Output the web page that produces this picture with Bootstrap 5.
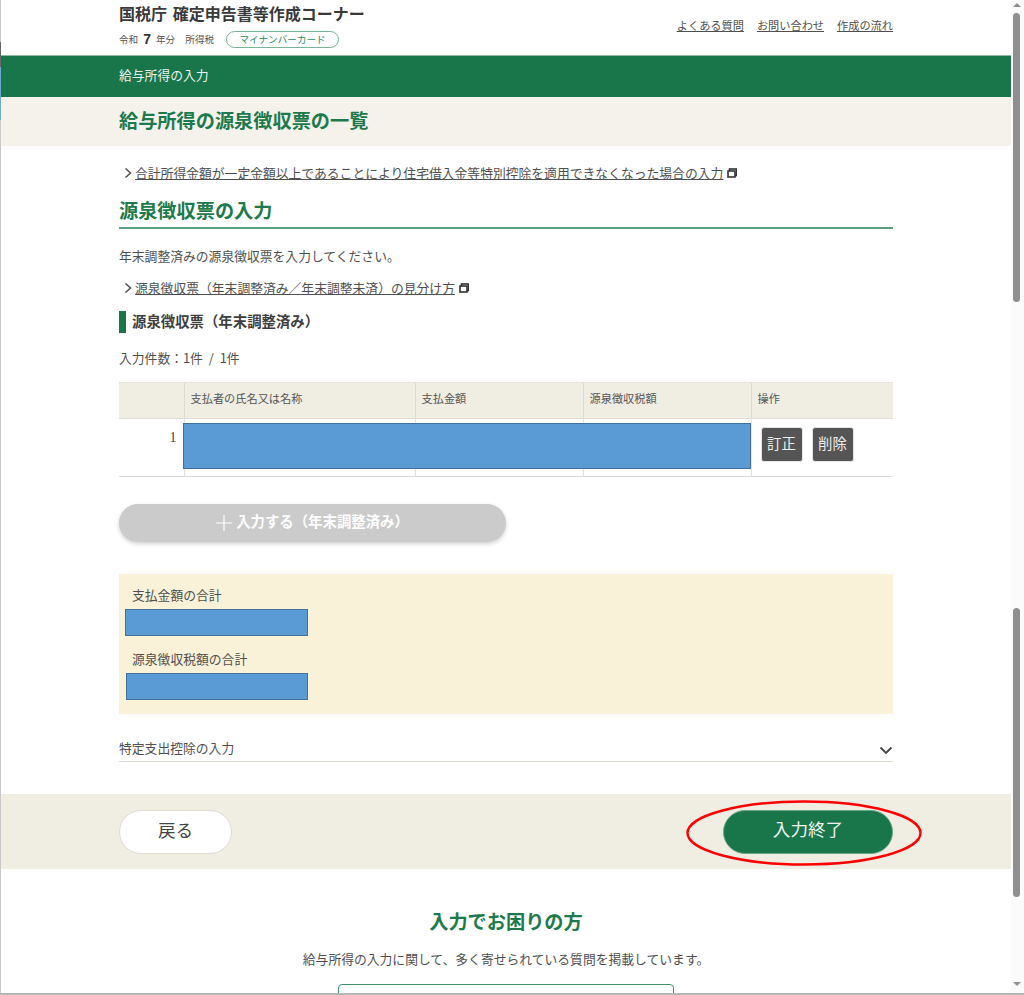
<!DOCTYPE html>
<html lang="ja">
<head>
<meta charset="utf-8">
<title>給与所得の源泉徴収票の一覧</title>
<link href="https://cdn.jsdelivr.net/npm/bootstrap@5.3.0/dist/css/bootstrap.min.css" rel="stylesheet">
<style>
html,body{height:995px;overflow:hidden;background:#fff}
body{font-family:"Noto Sans CJK JP","Liberation Sans",sans-serif;color:#505050;font-size:12.8px;line-height:1.4}
a{color:#505050}
.shell{width:1024px;height:995px;position:relative;overflow:hidden}
.edge-l{width:1px;background:#c9c9c9;flex:none}
.edge-l i{display:block;width:1px}
.edge-l .e1{height:42px}
.edge-l .e2{height:25px;background:#666}
.edge-l .e3{height:53px;background:#6fa9d0}
.pane{width:1010px;flex:none;overflow:hidden}
.wrap{width:774px}
.hdr{height:55px}
.site-title{font-size:16px;font-weight:700;color:#3a3a3a;line-height:22px;padding-top:2px;word-spacing:2px}
.site-sub{font-size:9.6px;color:#555;margin-top:7px;height:17px}
.site-sub b{font-size:14px;font-weight:700;font-family:"Liberation Sans",sans-serif;color:#333;margin:0 5px}
.my-pill{width:113px;height:17px;border:1px solid #79b498;border-radius:9px;color:#2f8a5e;line-height:14px;margin-left:12px}
.toplinks{font-size:11.2px;gap:13px;padding-top:17px;line-height:17px}
.bar-g{height:42px;background:#19754a;border-top:1px solid #8fbba5;color:#e9f2ed;padding-bottom:3px}
.band{height:49px;background:#f5f2ec;padding-bottom:2px}
.band-t,.sec-h{font-size:19.2px;font-weight:700;color:#1d7a4c;margin:0}
.lnk-row{height:20px;font-size:12.8px;line-height:20px}
.lnk-row svg{flex:none}
.chev{margin:0 3px 0 5px}
.lnk-one{margin-top:17px}
.sec-h{margin-top:15px;height:31px;line-height:24px;border-bottom:2px solid #5aa282}
.intro{margin:18px 0 0;height:18px;line-height:18px}
.lnk-two{margin-top:13px}
.sub-h{margin-top:13px;height:22px;border-left:7px solid #19754a;padding-left:6px;font-size:14.4px;font-weight:700;color:#3f3f3f;line-height:20px}
.count{margin-top:16px;height:18px;line-height:18px;word-spacing:3px}
.tbl-box{margin-top:15px;position:relative;height:95px}
.tbl{table-layout:fixed;width:774px;margin:0;border-collapse:collapse}
.tbl th{background:#f0ede3;font-size:11.2px;font-weight:400;height:36px;padding:0 6px 4px;vertical-align:middle;color:#555;border:0;border-left:1px solid #dedbd0;border-top:1px solid #e6e4dc;border-bottom:1px solid #e2dfd6}
.tbl th:first-child,.tbl td:first-child{border-left:0}
.tbl td{height:58px;padding:0;border:0;border-left:1px solid #e2e2e0;border-bottom:1px solid #dcdcdc;vertical-align:top;background:#fff}
.tbl .num{text-align:right;padding:9px 7px 0 0;font-family:"Liberation Serif",serif;font-size:14px;color:#444}
.ops{padding:8px 0 0 9px!important}
.op-row{gap:9px}
.btn-op{width:42px;height:35px;background:#555;color:#eee;font-size:14.4px;padding:0 0 4px;border:1px solid #e4e4e4;border-radius:3px;line-height:27px}
.btn-op:hover{background:#555;color:#eee}
.mask{background:#5b9bd5;border:1px solid #41719c}
.mask-row{position:absolute;left:64px;top:41px;width:568px;height:46px}
.btn-add{margin-top:27px;width:387px;height:38px;background:#cbcbcb;color:#fff;border:0;border-radius:19px;font-size:14.4px;font-weight:700;box-shadow:0 2px 4px rgba(0,0,0,.18);padding:0 0 4px}
.btn-add:disabled{background:#cbcbcb;color:#fff;opacity:1}
.btn-add svg{margin-top:3px}
.sum{margin-top:32px;height:140px;background:#f9f1d8;padding:12px 0 0 0}
.sum-l{padding-left:13px;height:18px;line-height:18px}
.mask-a{width:183px;height:27px;margin:5px 0 0 6px}
.mask-b{width:182px;height:27px;margin:5px 0 0 7px}
.sum-l2{margin-top:14px}
.acc{margin-top:26px;height:22px;border-bottom:1px solid #dddbd2;line-height:16px}
.acc svg{margin-top:6px}
.foot{margin-top:32px;height:75px;background:#f0ede3}
.btn-back{width:113px;height:44px;background:#fff;border:1px solid #e1dccf;border-radius:22px;color:#444;font-size:17.6px;padding:0 0 4px;margin-top:1px}
.btn-next{width:170px;height:44px;background:#19754a;border:1px solid #6aa587;border-radius:22px;color:#eef5f0;font-size:17.6px;padding:0 0 4px}
.btn-next:hover{background:#19754a;color:#eef5f0}
.help-h{margin:40px 0 0;font-size:19.2px;font-weight:700;color:#1d7a4c;line-height:24px;height:24px}
.help-t{margin:17px 0 0;height:18px;line-height:18px}
.help-box{width:336px;height:40px;margin-top:16px;border:1px solid #3f8f6a;border-radius:4px}
.sb{width:13px;flex:none;background:#fbfbfb}
.sb-up{width:0;height:0;border-left:4px solid transparent;border-right:4px solid transparent;border-bottom:4px solid #8f8f8f;margin:3px auto 0 2px}
.thumb{width:7px;background:#8f8f8f;border-radius:4px;margin-left:2px}
.t1{height:289px;margin-top:6px}
.t2{height:289px;margin-top:306px}
.sb-dn{width:0;height:0;border-left:4px solid transparent;border-right:4px solid transparent;border-top:4px solid #8f8f8f;margin:85px 0 0 2px}
.edge-r{width:1px;background:#d2d2d2;flex:none}
.edge-b{position:absolute;left:0;right:0;bottom:0;height:2px;background:#b5b5b5}
.ring{position:absolute;left:686px;top:800px}
</style>
</head>
<body>
<div class="shell d-flex">
  <div class="edge-l"><i class="e1"></i><i class="e2"></i><i class="e3"></i></div>
  <div class="pane">
    <header class="hdr">
      <div class="wrap mx-auto d-flex justify-content-between">
        <div>
          <div class="site-title">国税庁 確定申告書等作成コーナー</div>
          <div class="site-sub d-flex align-items-center">令和<b>7</b>年分<span class="ms-2">&nbsp;所得税</span><span class="my-pill d-inline-block text-center">マイナンバーカード</span></div>
        </div>
        <nav class="toplinks d-flex"><a href="#">よくある質問</a><a href="#">お問い合わせ</a><a href="#">作成の流れ</a></nav>
      </div>
    </header>
    <div class="bar-g d-flex align-items-center"><div class="wrap mx-auto">給与所得の入力</div></div>
    <div class="band d-flex align-items-center"><div class="wrap mx-auto"><h1 class="band-t mb-0">給与所得の源泉徴収票の一覧</h1></div></div>
    <main class="wrap mx-auto">
      <div class="lnk-row lnk-one d-flex align-items-center">
        <svg class="chev" width="8" height="12" viewBox="0 0 8 12"><path d="M1.500 1.500 6.500 6 1.500 10.500" fill="none" stroke="#555" stroke-width="1.600"/></svg>
        <a href="#">合計所得金額が一定金額以上であることにより住宅借入金等特別控除を適用できなくなった場合の入力</a>
        <svg class="ms-1" width="10" height="10" viewBox="0 0 10 10"><rect x="2.500" y="1" width="7" height="6.500" fill="#fff" stroke="#333" stroke-width="1.600"/><rect x="1" y="3" width="7" height="6" fill="#fff" stroke="#333" stroke-width="1.600"/></svg>
      </div>
      <h2 class="sec-h">源泉徴収票の入力</h2>
      <p class="intro">年末調整済みの源泉徴収票を入力してください。</p>
      <div class="lnk-row lnk-two d-flex align-items-center">
        <svg class="chev" width="8" height="12" viewBox="0 0 8 12"><path d="M1.500 1.500 6.500 6 1.500 10.500" fill="none" stroke="#555" stroke-width="1.600"/></svg>
        <a href="#">源泉徴収票（年末調整済み／年末調整未済）の見分け方</a>
        <svg class="ms-1" width="10" height="10" viewBox="0 0 10 10"><rect x="2.500" y="1" width="7" height="6.500" fill="#fff" stroke="#333" stroke-width="1.600"/><rect x="1" y="3" width="7" height="6" fill="#fff" stroke="#333" stroke-width="1.600"/></svg>
      </div>
      <div class="sub-h">源泉徴収票（年末調整済み）</div>
      <div class="count">入力件数：1件 / 1件</div>
      <div class="tbl-box">
        <table class="table tbl">
          <colgroup><col style="width:65px"><col style="width:231px"><col style="width:168px"><col style="width:168px"><col style="width:142px"></colgroup>
          <thead><tr><th></th><th>支払者の氏名又は名称</th><th>支払金額</th><th>源泉徴収税額</th><th>操作</th></tr></thead>
          <tbody><tr><td class="num">1</td><td></td><td></td><td></td>
            <td class="ops"><div class="d-flex op-row"><button type="button" class="btn btn-op">訂正</button><button type="button" class="btn btn-op">削除</button></div></td></tr></tbody>
        </table>
        <div class="mask mask-row"></div>
      </div>
      <button type="button" class="btn btn-add d-flex align-items-center justify-content-center" disabled>
        <svg class="me-1" width="16" height="16" viewBox="0 0 16 16"><path d="M8 0v16M0 8h16" stroke="#fff" stroke-width="1.200"/></svg>入力する（年末調整済み）
      </button>
      <section class="sum">
        <div class="sum-l">支払金額の合計</div>
        <div class="mask mask-a"></div>
        <div class="sum-l sum-l2">源泉徴収税額の合計</div>
        <div class="mask mask-b"></div>
      </section>
      <div class="acc d-flex justify-content-between">
        <span>特定支出控除の入力</span>
        <svg width="14" height="9" viewBox="0 0 14 9"><path d="M1.500 1.500 7 7l5.500-5.500" fill="none" stroke="#444" stroke-width="1.800"/></svg>
      </div>
    </main>
    <div class="foot d-flex align-items-center">
      <div class="wrap mx-auto d-flex justify-content-between align-items-center">
        <button type="button" class="btn btn-back">戻る</button>
        <button type="button" class="btn btn-next">入力終了</button>
      </div>
    </div>
    <div class="wrap mx-auto text-center">
      <h2 class="help-h">入力でお困りの方</h2>
      <p class="help-t">給与所得の入力に関して、多く寄せられている質問を掲載しています。</p>
      <div class="help-box mx-auto"></div>
    </div>
  </div>
  <div class="sb">
    <div class="sb-up"></div>
    <div class="thumb t1"></div>
    <div class="thumb t2"></div>
    <div class="sb-dn"></div>
  </div>
  <div class="edge-r"></div>
  <div class="edge-b"></div>
  <svg class="ring" width="236" height="66" viewBox="0 0 236 66"><ellipse cx="118" cy="33" rx="116.500" ry="31.500" fill="none" stroke="#f00" stroke-width="2.400"/></svg>
</div>
<script src="https://cdn.jsdelivr.net/npm/bootstrap@5.3.0/dist/js/bootstrap.bundle.min.js"></script>
</body>
</html>
